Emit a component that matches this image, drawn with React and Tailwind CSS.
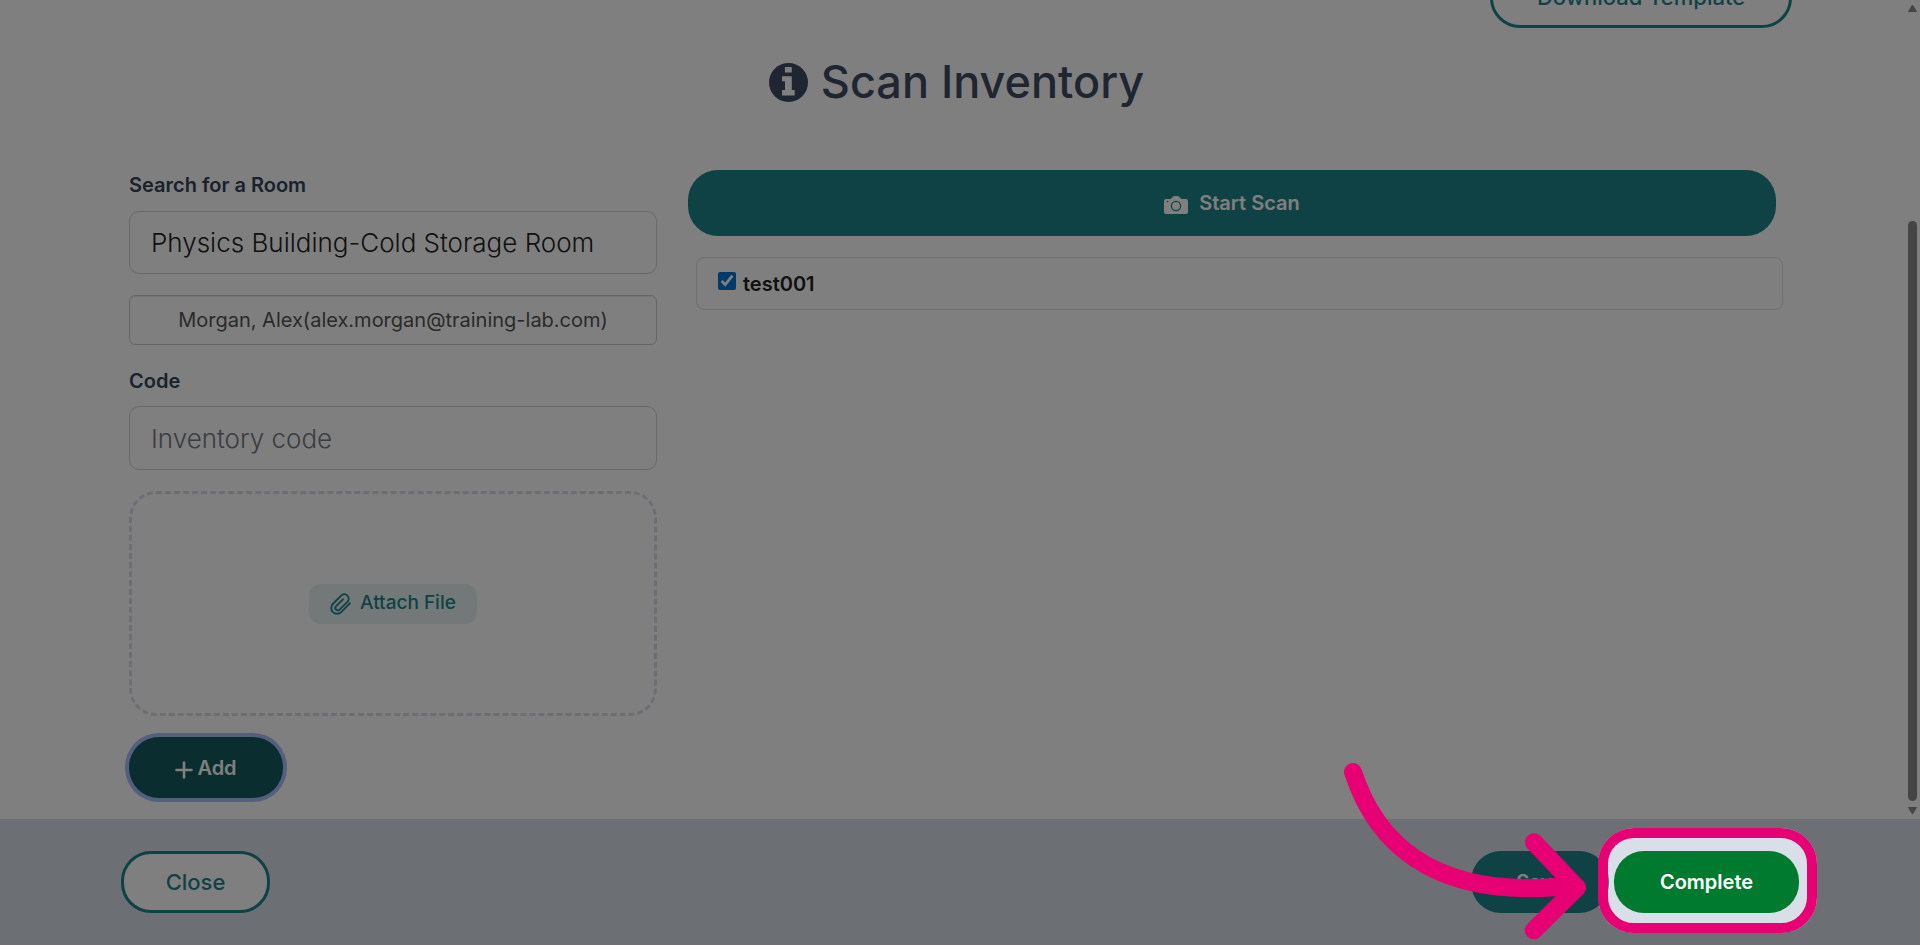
import React from "react";

const pill = "rounded-[30px] font-semibold text-[20px] leading-[30px]";
const outline = "h-[62px] rounded-[30px] border-3 border-[#1f858b] bg-white text-[22px] leading-[30px] font-medium text-[#1f858b]";

function InfoIcon() {
  return (
    <svg className="size-[39px]" viewBox="0 0 39 39" aria-hidden="true">
      <circle cx="19.5" cy="19.5" r="19.5" fill="currentColor" />
      <path d="M16.500 4h5.700a.6.6 0 0 1 .6.6v4.400a.6.6 0 0 1-.6.6h-5.700a.6.6 0 0 1-.6-.6V4.600a.6.6 0 0 1 .6-.6ZM13.600 13.300h8.600a.6.6 0 0 1 .6.6V27h2.300a.6.6 0 0 1 .6.6v4.200a.6.6 0 0 1-.6.6H13.600a.6.6 0 0 1-.6-.6v-4.200a.6.6 0 0 1 .6-.6H16v-8.700h-2.400a.6.6 0 0 1-.6-.6v-3.800a.6.6 0 0 1 .6-.6Z" fill="#fff" />
    </svg>
  );
}

function CameraIcon() {
  return (
    <svg className="mt-1 h-[18px] w-6" viewBox="0 0 24 18" aria-hidden="true">
      <path d="M2 3h4.500L9 .7C9.500.2 10 0 10.600 0h3c.6 0 1.100.2 1.600.7L17.500 3H22a2 2 0 0 1 2 2v11a2 2 0 0 1-2 2H2a2 2 0 0 1-2-2V5a2 2 0 0 1 2-2Z" fill="currentColor" />
      <circle cx="12" cy="10" r="4.600" fill="none" stroke="#1f858b" strokeWidth="1.300" />
      <circle cx="3.600" cy="5.600" r=".8" fill="#1f858b" />
    </svg>
  );
}

function Paperclip() {
  return (
    <svg className="h-6 w-[22px]" viewBox="0 0 22 24" fill="none" stroke="currentColor" strokeWidth="1.900" strokeLinecap="round" strokeLinejoin="round" aria-hidden="true">
      <path d="m20 11.200-8.800 8.900a5.700 5.700 0 0 1-8.200-8.300l8.200-8.200a4.300 4.300 0 0 1 6.200 6.200l-7.800 7.900a2.400 2.400 0 0 1-3.500-3.500l6.900-6.900" />
    </svg>
  );
}

function ScrollBar() {
  return (
    <div className="flex w-[15px] shrink-0 flex-col items-center justify-between py-[4px]" aria-hidden="true">
      <svg className="h-2 w-[9px]" viewBox="0 0 9 8"><path d="M4.5 1 8.5 7.5H.5Z" fill="#8b8b8b" stroke="#8b8b8b" strokeLinejoin="round" /></svg>
      <div className="mt-auto mb-[6px] h-[580px] w-[9px] rounded-full bg-[#8b8b8b]" />
      <svg className="h-2 w-[9px]" viewBox="0 0 9 8"><path d="M4.5 7 8.5.5H.5Z" fill="#8b8b8b" stroke="#8b8b8b" strokeLinejoin="round" /></svg>
    </div>
  );
}

export default function App() {
  return (
    <div className="flex h-screen flex-col overflow-hidden bg-white font-['Inter',sans-serif] text-[#1b1b1b]">
      <div className="flex min-h-0 flex-1">
        <main className="flex min-w-0 flex-1 flex-col justify-end overflow-hidden pr-[113px] pb-[21px] pl-[121px]">
          <div className="flex shrink-0 justify-end">
            <button className={`${outline} w-[302px]`}>Download Template</button>
          </div>
          <h1 className="mt-[26px] flex shrink-0 items-center justify-center gap-[13px] text-[45px] leading-[56px] font-medium text-[#3f4c63]">
            <InfoIcon />
            Scan Inventory
          </h1>
          <div className="mt-[58px] flex shrink-0">
            <section className="flex w-1/3 flex-col pr-[21px] pl-2">
              <label htmlFor="room" className="text-[20px] leading-[34px] font-semibold text-[#33455a]">Search for a Room</label>
              <input id="room" defaultValue="Physics Building-Cold Storage Room" className="mt-[9px] h-[63px] rounded-[10px] border border-[#d2d2d2] px-[21px] text-[26px] font-light text-[#222]" />
              <input aria-label="Contact" readOnly defaultValue="Morgan, Alex(alex.morgan@training-lab.com)" className="mt-[21px] h-[50px] rounded-[6px] border border-[#ccc] px-3 text-center text-[20px] text-[#555] shadow-[inset_0_1px_1px_rgba(0,0,0,0.08)]" />
              <label htmlFor="code" className="mt-[19px] text-[20px] leading-[34px] font-semibold text-[#33455a]">Code</label>
              <input id="code" placeholder="Inventory code" className="mt-[8px] h-[64px] rounded-[10px] border border-[#d2d2d2] px-[21px] text-[26px] font-light placeholder:text-[#757b82]" />
              <div className="mt-[21px] flex h-[225px] items-center justify-center rounded-[27px] border-3 border-dashed border-[#dadde6]">
                <button className="flex h-10 w-[168px] items-center justify-center gap-2 rounded-xl bg-[#e6f3f3] text-[19px] font-medium text-[#1f858b]">
                  <Paperclip />
                  Attach File
                </button>
              </div>
              <button className={`${pill} mt-[21px] flex h-[61px] w-[154px] items-center justify-center gap-1 bg-[#145c61] text-white shadow-[0_0_0_4px_#a9bffa]`}>
                <svg className="mt-1 size-[18px]" viewBox="0 0 18 18" stroke="currentColor" strokeWidth="2.600" strokeLinecap="round" aria-hidden="true"><path d="M9 1.500v15M1.500 9h15" /></svg>
                Add
              </button>
            </section>
            <section className="flex min-w-0 flex-1 flex-col pt-[2px] pr-[9px] pl-[10px]">
              <button className={`${pill} mr-[7px] flex h-[66px] items-center justify-center gap-[11px] bg-[#1f858b] text-white`}>
                <CameraIcon />
                Start Scan
              </button>
              <div className="mt-[21px] ml-2 flex h-[53px] items-center rounded-[8px] border border-[#ddd] px-[21px]">
                <label className="flex items-center gap-[7px] text-[20px] font-semibold text-[#222]">
                  <input type="checkbox" defaultChecked className="mb-[6px] size-[18px] accent-[#0075d0]" />
                  test001
                </label>
              </div>
            </section>
          </div>
        </main>
        <ScrollBar />
      </div>
      <footer className="flex h-[126px] shrink-0 items-center justify-between bg-[#d9dfe9] px-[121px]">
        <button className={`${outline} w-[149px]`}>Close</button>
        <div className="flex gap-[5px]">
          <button className={`${pill} h-[62px] w-[138px] bg-[#1f858b] text-white`}>Save</button>
          <div className="relative">
            <button className={`${pill} h-[62px] w-[185px] bg-[#007a2f] text-white`}>Complete</button>
            <div className="pointer-events-none absolute -top-[23px] -right-[18px] -bottom-[20px] -left-[16px] rounded-[36px] border-10 border-[#e60073] shadow-[0_0_0_9999px_rgba(0,0,0,0.5)]" />
            <svg className="pointer-events-none absolute -top-[96px] -left-[274px] h-[190px] w-[260px]" viewBox="0 0 260 190" fill="none" stroke="#e60073" strokeWidth="18" strokeLinecap="round" strokeLinejoin="round" aria-hidden="true">
              <path d="M13 17C35 85 90 142 217 132L237 132.5" />
              <path d="M194 87.300 237 132.600 193.700 175.300" />
            </svg>
          </div>
        </div>
      </footer>
    </div>
  );
}
